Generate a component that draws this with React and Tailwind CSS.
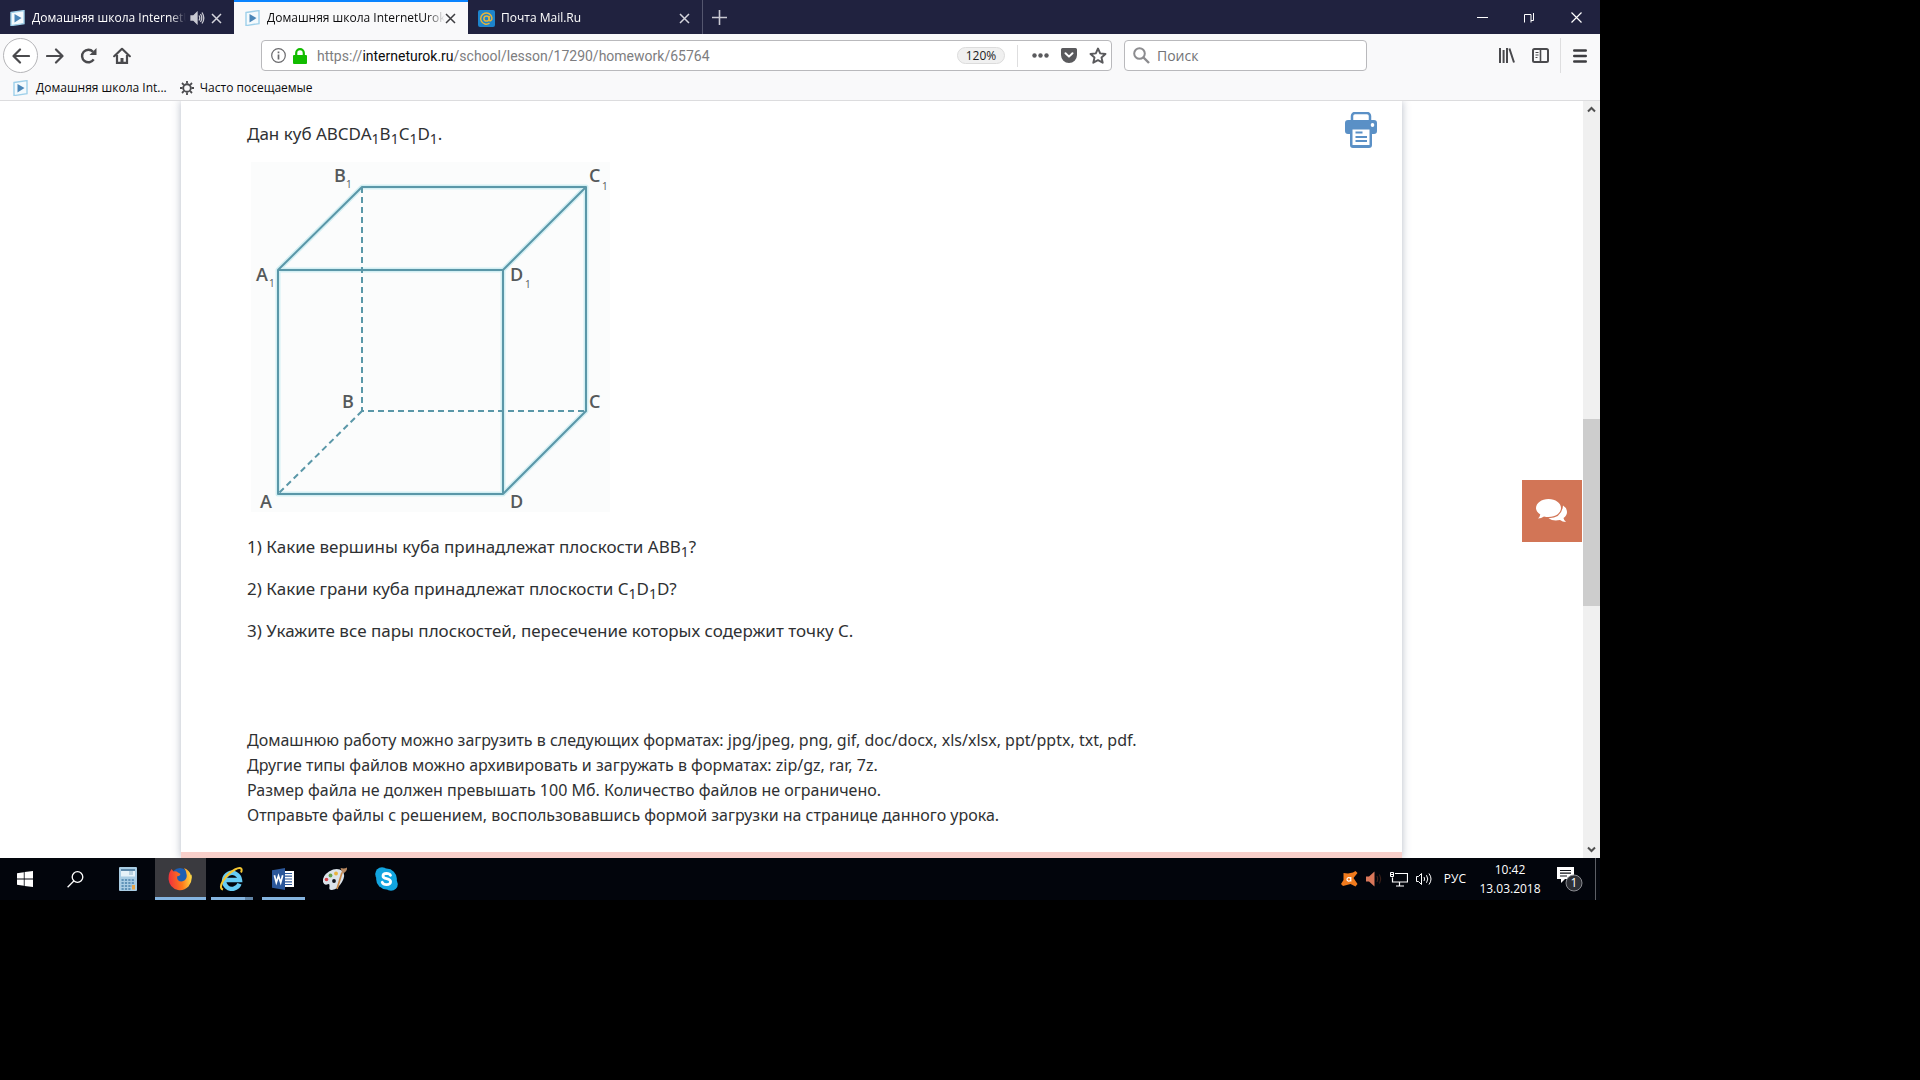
function LessonIcon() {
  return (
    <svg width="16" height="16" viewBox="0 0 16 16" aria-hidden="true" className="shrink-0">
      <path d="M1 2.5 14 .6v13L1 15.6z" fill="#f4fafd" stroke="#9fd0ea" strokeWidth="1.4" />
      <path d="M4.5 4v8.4l7-4.3z" fill="#4a86b8" />
    </svg>
  );
}

function CloseIcon({ color }) {
  return (
    <svg width="11" height="11" viewBox="0 0 11 11" fill="none" stroke={color} strokeWidth="1.5" aria-hidden="true">
      <path d="M1 1l9 9M10 1l-9 9" />
    </svg>
  );
}

function Tab({ title, icon, active, playing }) {
  return (
    <div
      className={
        active
          ? "flex h-[34px] w-[234px] items-center border-t-2 border-[#0a84ff] bg-[#f9f9fa] pr-2 pl-[11px] text-[#0c0c0d]"
          : "flex h-[34px] w-[234px] items-center border-t-2 border-transparent pr-2 pl-[10px] text-white"
      }
    >
      <button type="button" className="flex min-w-0 flex-1 items-center gap-[6px] text-left">
        {icon}
        <span className="min-w-0 flex-1 overflow-hidden whitespace-nowrap [mask-image:linear-gradient(to_right,black_90%,transparent)]">
          {title}
        </span>
      </button>
      {playing && (
        <button type="button" aria-label="Отключить звук вкладки" className="ml-1">
          <svg width="15" height="14" viewBox="0 0 15 14" fill="none" stroke="#c9c9d2" strokeWidth="1.3" aria-hidden="true">
            <path d="M1 5h2.5L7 1.5v11L3.5 9H1z" fill="#c9c9d2" />
            <path d="M9 4.5q1.6 2.5 0 5M10.500 3q2.600 4 0 8M12 1.500q3.600 5.500 0 11" />
          </svg>
        </button>
      )}
      <button type="button" aria-label="Закрыть вкладку" className={playing ? "p-1 pl-[6px]" : "p-1 pl-0"}>
        <CloseIcon color={active ? "#3d3d40" : "#d4d4dc"} />
      </button>
    </div>
  );
}

function TabStrip() {
  return (
    <div className="flex h-[34px] items-center bg-[#20223f] text-xs">
      <Tab title="Домашняя школа InternetUrok" icon={<LessonIcon />} playing />
      <Tab title="Домашняя школа InternetUrok" icon={<LessonIcon />} active />
      <Tab
        title="Почта Mail.Ru"
        icon={
          <svg width="17" height="17" viewBox="0 0 17 17" aria-hidden="true">
            <rect width="17" height="17" rx="2" fill="#1d84cc" />
            <g fill="none" stroke="#e6b53c" strokeWidth="1.500">
              <circle cx="8.500" cy="8.500" r="2.600" />
              <path d="M11.100 6v3.500q.2 1.600 1.500 1.300 1.500-.7 1.300-3A5.600 5.600 0 1 0 11.500 13.200" />
            </g>
          </svg>
        }
      />
      <button type="button" aria-label="Новая вкладка" className="flex h-full items-center border-l border-[#54566e] px-[9px]">
        <svg width="15" height="15" viewBox="0 0 15 15" stroke="#c9c9d2" strokeWidth="1.6" aria-hidden="true">
          <path d="M7.500 0v15M0 7.500h15" />
        </svg>
      </button>
      <div className="ml-auto flex h-full items-center text-white">
        <button type="button" aria-label="Свернуть" className="flex h-full w-[46px] items-center justify-center">
          <svg width="11" height="11" viewBox="0 0 11 11" stroke="#fff" aria-hidden="true">
            <path d="M0 5.500h11" />
          </svg>
        </button>
        <button type="button" aria-label="Восстановить" className="flex h-full w-[48px] items-center justify-center">
          <svg width="11" height="11" viewBox="0 0 11 11" fill="none" stroke="#fff" aria-hidden="true">
            <path d="M.5 10.500V2.500h6.500V10.500M3 .5M9.500 1v7.500H7" />
          </svg>
        </button>
        <button type="button" aria-label="Закрыть" className="flex h-full w-[47px] items-center justify-center">
          <svg width="11" height="11" viewBox="0 0 11 11" stroke="#fff" strokeWidth="1.2" aria-hidden="true">
            <path d="M.5.5l10 10M10.500.5l-10 10" />
          </svg>
        </button>
      </div>
    </div>
  );
}

function NavBar() {
  return (
    <div className="flex h-[43px] items-center pr-[13px] pl-[3px]">
      <button type="button" aria-label="Назад" className="flex size-[35px] items-center justify-center rounded-full border border-[#b5b5b8] bg-white">
        <svg width="18" height="16" viewBox="0 0 18 16" fill="none" stroke="#4a4a4d" strokeWidth="2.200" strokeLinecap="round" strokeLinejoin="round" aria-hidden="true">
          <path d="M17 8H2M8 1.500 1.500 8 8 14.500" />
        </svg>
      </button>
      <button type="button" aria-label="Вперёд" className="ml-[7px] p-px">
        <svg width="18" height="16" viewBox="0 0 18 16" fill="none" stroke="#4a4a4d" strokeWidth="2.200" strokeLinecap="round" strokeLinejoin="round" aria-hidden="true">
          <path d="M1 8h15M10 1.500 16.500 8 10 14.500" />
        </svg>
      </button>
      <button type="button" aria-label="Обновить" className="ml-[14px] p-px">
        <svg width="17" height="16" viewBox="0 0 17 16" fill="none" stroke="#4a4a4d" strokeWidth="2.400" aria-hidden="true">
          <path d="M13.700 11.400A6.300 6.300 0 1 1 13 3.700" />
          <path d="M16.500 0v7h-7z" fill="#4a4a4d" stroke="none" />
        </svg>
      </button>
      <button type="button" aria-label="Домой" className="ml-[14px] p-px">
        <svg width="18" height="17" viewBox="0 0 18 17" fill="none" stroke="#4a4a4d" strokeWidth="2.200" aria-hidden="true">
          <path d="M1.200 9.200 9 1.800l7.800 7.400" strokeLinecap="round" strokeLinejoin="round" />
          <path d="M4 8v7.900h10V8" />
          <path d="M9 16v-5" strokeWidth="3" />
        </svg>
      </button>

      <div className="ml-[129px] flex h-[31px] min-w-0 flex-1 items-center rounded-sm border border-[#b9b9bc] bg-white pr-1 pl-[9px]">
        <button type="button" aria-label="Сведения о сайте" className="flex items-center gap-[7px]">
          <svg width="15" height="15" viewBox="0 0 15 15" fill="none" stroke="#6a6a6d" aria-hidden="true">
            <circle cx="7.500" cy="7.500" r="6.800" strokeWidth="1.200" />
            <path d="M7.500 6.500V11.500M7.500 3.500v1.700" strokeWidth="1.700" />
          </svg>
          <svg width="14" height="16" viewBox="0 0 14 16" aria-hidden="true">
            <rect y="7" width="14" height="9" rx="1" fill="#12bc00" />
            <path d="M3.200 8V5a3.800 3.800 0 0 1 7.600 0v3" fill="none" stroke="#12bc00" strokeWidth="2.200" />
          </svg>
        </button>
        <label className='relative ml-[10px] flex h-full min-w-0 flex-1 items-center overflow-hidden font-["Roboto",sans-serif] text-sm whitespace-nowrap text-[#7d7d80]'>
          <input type="text" aria-label="Адрес" className="absolute inset-0 bg-transparent outline-none" />
          <span>
            https://<span className="text-[#0c0c0d]">interneturok.ru</span>/school/lesson/17290/homework/65764
          </span>
        </label>
        <button type="button" className="flex h-[17px] w-[48px] items-center justify-center rounded-full border border-[#dcdcdc] bg-[#f0f0f0] text-xs text-[#1c1c1e]">
          120%
        </button>
        <span className="ml-3 h-[22px] w-px bg-[#dededf]" />
        <button type="button" aria-label="Действия на странице" className="ml-[14px]">
          <svg width="17" height="5" viewBox="0 0 17 5" fill="#5a5a5d" aria-hidden="true">
            <circle cx="2.500" cy="2.500" r="2.200" />
            <circle cx="8.500" cy="2.500" r="2.200" />
            <circle cx="14.500" cy="2.500" r="2.200" />
          </svg>
        </button>
        <button type="button" aria-label="Сохранить в Pocket" className="ml-3">
          <svg width="16" height="15" viewBox="0 0 16 15" aria-hidden="true">
            <path d="M1.500 0h13A1.500 1.500 0 0 1 16 1.500V7A8 8 0 0 1 0 7V1.500A1.500 1.500 0 0 1 1.500 0z" fill="#5a5a5d" />
            <path d="M4.500 5.200 8 8.600l3.500-3.400" fill="none" stroke="#fff" strokeWidth="2" strokeLinecap="round" strokeLinejoin="round" />
          </svg>
        </button>
        <button type="button" aria-label="Добавить в закладки" className="ml-3">
          <svg width="18" height="17" viewBox="0 0 18 17" fill="none" stroke="#5a5a5d" strokeWidth="1.900" strokeLinejoin="round" aria-hidden="true">
            <path d="M9 1.500l2.200 4.900 5.300.6-4 3.500 1.200 5.200L9 13.100l-4.700 2.600 1.200-5.200-4-3.500 5.300-.6z" />
          </svg>
        </button>
      </div>

      <label className="ml-3 flex h-[31px] w-[243px] items-center gap-[7px] rounded-sm border border-[#b9b9bc] bg-white px-2">
        <svg width="17" height="17" viewBox="0 0 17 17" fill="none" stroke="#8c8c8f" aria-hidden="true">
          <circle cx="6.500" cy="6.500" r="5.300" strokeWidth="2" />
          <path d="M10.500 10.500l5.500 5.500" strokeWidth="2.400" />
        </svg>
        <input type="search" aria-label="Поиск" placeholder="Поиск" className="min-w-0 flex-1 bg-transparent text-sm outline-none placeholder:text-[#737376]" />
      </label>

      <button type="button" aria-label="Библиотека" className="ml-[132px]">
        <svg width="16" height="15" viewBox="0 0 16 15" stroke="#4a4a4d" strokeWidth="2" aria-hidden="true">
          <path d="M1 0v15M4.600 2v13M8 0v15M10.400 .5l4.600 14" />
        </svg>
      </button>
      <button type="button" aria-label="Боковая панель" className="ml-[17px]">
        <svg width="17" height="15" viewBox="0 0 17 15" fill="none" stroke="#4a4a4d" aria-hidden="true">
          <rect x="1" y="1" width="15" height="13" rx="1.500" strokeWidth="2" />
          <path d="M8.500 1v13" strokeWidth="1.600" />
          <path d="M3.500 4.500h3M3.500 7h3M3.500 9.500h2" />
        </svg>
      </button>
      <span className="ml-[11px] h-[35px] w-px bg-[#dededf]" />
      <button type="button" aria-label="Меню" className="ml-3">
        <svg width="14" height="14" viewBox="0 0 14 14" stroke="#3d3d40" strokeWidth="2.400" strokeLinecap="round" aria-hidden="true">
          <path d="M1.200 1.500h11.600M1.200 7h11.600M1.200 12.500h11.600" />
        </svg>
      </button>
    </div>
  );
}

function BookmarksBar() {
  return (
    <div className="flex h-6 items-center gap-[13px] border-b border-[#dcdcde] pb-[2px] pl-[13px] text-xs text-[#0c0c0d]">
      <a href="#lesson" className="flex items-center gap-[7px]">
        <LessonIcon />
        Домашняя школа Int...
      </a>
      <button type="button" className="flex items-center gap-[6px]">
        <svg width="14" height="14" viewBox="0 0 14 14" fill="none" stroke="#4a4a4d" aria-hidden="true">
          <circle cx="7" cy="7" r="3.800" strokeWidth="1.900" />
          <path d="M7 0v2.500M7 11.500V14M0 7h2.500M11.500 7H14M2 2l1.800 1.800M10.200 10.200 12 12M12 2l-1.800 1.800M3.800 10.200 2 12" strokeWidth="1.800" />
        </svg>
        Часто посещаемые
      </button>
    </div>
  );
}

function CubeDrawing() {
  return (
    <svg width="359" height="350" viewBox="251 162 359 350" role="img" aria-label="Куб" className="ml-1 block">
      <rect x="251" y="162" width="359" height="350" fill="#fbfcfc" />
      <g fill="none" strokeLinejoin="round">
        <g stroke="#d3eff3" strokeWidth="5">
          <path d="M278 270H503V494H278zM278 270 362 187H586L503 270M586 187V411L503 494" />
        </g>
        <g stroke="#5a97a8" strokeWidth="2">
          <path d="M278 270H503V494H278zM278 270 362 187H586L503 270M586 187V411L503 494" />
          <path d="M362 187V411H586M362 411 278 494" strokeDasharray="6 4" />
        </g>
      </g>
      <g fontSize="18" fontWeight="600" fill="#55595b" fontFamily="'Open Sans', sans-serif">
        <text x="334" y="182">B</text>
        <text x="589" y="182">C</text>
        <text x="256" y="281">A</text>
        <text x="510" y="281">D</text>
        <text x="342" y="408">B</text>
        <text x="589" y="408">C</text>
        <text x="260" y="508">A</text>
        <text x="510" y="508">D</text>
      </g>
      <g fontSize="10" fill="#55595b" fontFamily="'Open Sans', sans-serif">
        <text x="346" y="188">1</text>
        <text x="602" y="190">1</text>
        <text x="269" y="287">1</text>
        <text x="525" y="288">1</text>
      </g>
    </svg>
  );
}

function One() {
  return <sub className="bottom-[-4px] text-sm leading-none">1</sub>;
}

function LessonPage() {
  return (
    <div className="relative flex overflow-hidden bg-white">
      <div className="flex min-w-0 flex-1 pr-[181px] pl-[181px]">
        <main className='min-w-0 flex-1 bg-white pt-[11px] font-["Noto_Sans",sans-serif] text-[#2f3133] shadow-[0_0_8px_rgba(90,105,130,0.45)]'>
          <div className="pr-[25px] pl-[66px]">
            <div className="flex items-start justify-between">
              <p className="pt-2 text-[17px] leading-7">
                Дан куб ABCDA<One />B<One />C<One />D<One />.
              </p>
              <button type="button" aria-label="Распечатать">
                <svg width="32" height="36" viewBox="0 0 32 36" aria-hidden="true">
                  <path d="M7 8V4a3 3 0 0 1 3-3h12a3 3 0 0 1 3 3v4" fill="none" stroke="#5a90c6" strokeWidth="2.500" />
                  <path d="M3 8h26a3 3 0 0 1 3 3v8a3 3 0 0 1-3 3h-2v11a3 3 0 0 1-3 3H8a3 3 0 0 1-3-3V22H3a3 3 0 0 1-3-3v-8a3 3 0 0 1 3-3z" fill="#5a90c6" />
                  <path d="M7.500 17.500h17V33h-17z" fill="#fff" />
                  <path d="M10.500 20.500h7M10.500 25h11.500M10.500 29h11.500" stroke="#5a90c6" strokeWidth="2.200" />
                  <ellipse cx="27.500" cy="13" rx="1.800" ry="2" fill="#fff" />
                </svg>
              </button>
            </div>
            <div className="mt-[14px]">
              <CubeDrawing />
            </div>
            <div className="mt-[21px] flex flex-col gap-[14px] text-[17px] leading-7">
              <p>1) Какие вершины куба принадлежат плоскости ABB<One />?</p>
              <p>2) Какие грани куба принадлежат плоскости C<One />D<One />D?</p>
              <p>3) Укажите все пары плоскостей, пересечение которых содержит точку C.</p>
            </div>
            <div className="mt-[83px] text-base leading-[25px]">
              <p>Домашнюю работу можно загрузить в следующих форматах: jpg/jpeg, png, gif, doc/docx, xls/xlsx, ppt/pptx, txt, pdf.</p>
              <p>Другие типы файлов можно архивировать и загружать в форматах: zip/gz, rar, 7z.</p>
              <p>Размер файла не должен превышать 100 Мб. Количество файлов не ограничено.</p>
              <p>Отправьте файлы с решением, воспользовавшись формой загрузки на странице данного урока.</p>
            </div>
          </div>
          <div className="mt-[24px] h-[6px] bg-[#f8cfca]" />
        </main>
      </div>

      <button type="button" aria-label="Открыть чат" className="absolute top-1/2 right-[18px] flex h-[62px] w-[60px] items-center justify-center bg-[#d27556]">
        <svg width="32" height="24" viewBox="0 0 32 24" fill="#fff" aria-hidden="true">
          <path d="M12.500 0C19.500 0 25 4 25 9s-5.500 9-12.500 9q-2.300 0-4.500-.6-2.800 1.900-6 2 2-1.700 2.300-3.900Q0 12.800 0 9c0-5 5.500-9 12.500-9z" />
          <path d="M27 6.500q4 2.600 4 6.500 0 3.500-3.500 6 .3 2.200 2.500 4-3.500 0-6-2-7 1.500-11.500-1.700Q26 19 27 6.500z" />
        </svg>
      </button>

      <div className="flex w-[17px] flex-col bg-[#f0f0f0]">
        <button type="button" aria-label="Прокрутить вверх" className="flex h-[17px] items-center justify-center">
          <svg width="9" height="7" viewBox="0 0 9 7" fill="none" stroke="#505050" strokeWidth="2" aria-hidden="true">
            <path d="M1 5.500 4.500 2 8 5.500" />
          </svg>
        </button>
        <div className="grow-[301]" />
        <div className="grow-[187] bg-[#cdcdcd]" />
        <div className="grow-[235]" />
        <button type="button" aria-label="Прокрутить вниз" className="flex h-[17px] items-center justify-center">
          <svg width="9" height="7" viewBox="0 0 9 7" fill="none" stroke="#505050" strokeWidth="2" aria-hidden="true">
            <path d="M1 1.500 4.500 5 8 1.500" />
          </svg>
        </button>
      </div>
    </div>
  );
}

function Taskbar() {
  return (
    <footer className="flex h-[42px] items-stretch bg-[#02050c] text-xs text-white">
      <button type="button" aria-label="Пуск" className="flex w-[50px] items-center justify-center">
        <svg width="16" height="16" viewBox="0 0 16 16" fill="#fff" aria-hidden="true">
          <path d="M0 2.200 6.800 1.200v6.300H0zM7.600 1.100 16 0v7.500H7.600zM0 8.400h6.800v6.400L0 13.800zM7.600 8.400H16V16l-8.400-1.100z" />
        </svg>
      </button>
      <button type="button" aria-label="Поиск в Windows" className="flex w-[50px] items-center justify-center">
        <svg width="17" height="17" viewBox="0 0 17 17" fill="none" stroke="#fff" strokeWidth="1.300" aria-hidden="true">
          <circle cx="10.500" cy="6" r="5.300" />
          <path d="M6.800 10 .6 16.200" />
        </svg>
      </button>
      <button type="button" aria-label="Калькулятор" className="ml-[3px] flex w-[50px] items-center justify-center">
        <svg width="18" height="24" viewBox="0 0 18 24" aria-hidden="true">
          <rect width="18" height="24" rx="1" fill="#a9cde4" />
          <rect x="2" y="2" width="14" height="7.500" fill="#e6f2f8" />
          <path d="M2 2h14v2H2z" fill="#5b87a8" />
          <path d="M10 4h4v4h-4z" fill="#b9d2e0" />
          <path d="M2.500 13h13M2.500 16h13M2.500 19h13M2.500 22h9" stroke="#5f93b8" strokeWidth="1.800" strokeDasharray="2.200 1.200" />
          <rect x="13" y="18" width="3" height="4.500" fill="#e8a64a" />
        </svg>
      </button>
      <button type="button" aria-label="Firefox" className="ml-[2px] flex w-[51px] items-center justify-center border-b-[3px] border-[#84b4e0] bg-[#3a3a3f] pt-[3px] pr-[2px]">
        <svg width="24" height="24" viewBox="0 0 24 24" aria-hidden="true">
          <defs>
            <linearGradient id="fox" x1="0" y1=".4" x2="1" y2=".3">
              <stop offset="0" stopColor="#f0323c" />
              <stop offset=".55" stopColor="#ff7a1a" />
              <stop offset="1" stopColor="#ffe14a" />
            </linearGradient>
          </defs>
          <circle cx="12" cy="10" r="9" fill="#1d5fb4" />
          <path d="M1.500 5.500 3.500 2l2 2.500Q8 3.500 10 5.500l2.500 1.500q-.5 2-3.500 2.500 0 5 4.500 5 4-.5 5-4Q19.500 5 16 1q5.500 2 7 7.500.500-1 .4-1.500Q25 14 20.500 19.500 16 24 10 23 1.500 21 .6 12.500 .4 8 1.500 5.500z" fill="url(#fox)" />
        </svg>
      </button>
      <button type="button" aria-label="Internet Explorer" className="ml-[5px] flex w-[42px] flex-col items-center">
        <span className="flex flex-1 items-center pt-[3px] pr-[2px]">
          <svg width="24" height="24" viewBox="0 0 24 24" fill="none" aria-hidden="true">
            <path d="M20.500 16.800A8 8 0 1 1 21 13H7" stroke="#66ccf5" strokeWidth="4.400" />
            <path d="M4 22.500C-2 21 6 8 16 2.500q5-2.600 6.500-.5.500 1.500-.5 3.500" stroke="#f4c632" strokeWidth="2" />
          </svg>
        </span>
        <span className="flex h-[3px] w-full bg-[#84b4e0]">
          <span className="ml-auto w-2 bg-[#6185a8]" />
        </span>
      </button>
      <button type="button" aria-label="Word" className="ml-[9px] flex w-[43px] items-center justify-center border-b-[3px] border-[#84b4e0] pt-[3px] pr-[2px]">
        <svg width="22" height="22" viewBox="0 0 22 22" aria-hidden="true">
          <path d="M12 3h10v16H12z" fill="#fff" />
          <path d="M13 5.500h7M13 8.200h7M13 11h7M13 13.800h7M13 16.500h7" stroke="#2b579a" strokeWidth="1.200" />
          <path d="M0 2.200 13 0v22L0 19.800z" fill="#2b579a" />
          <path d="M2.400 7.200 4.300 14.500 6.500 8 8.700 14.500l2-7.300" fill="none" stroke="#fff" strokeWidth="1.700" />
        </svg>
      </button>
      <button type="button" aria-label="Paint" className="ml-[5px] flex w-[50px] items-center justify-center">
        <svg width="26" height="24" viewBox="0 0 26 24" aria-hidden="true">
          <path d="M1 15Q0 9 7 4.500 15 0 20.500 4q3.500 4-.5 11-4 7-10 8-3.500.2-2.500-3.500Q8 16 5 17.500q-3 .8-4-2.500z" fill="#dbe3ea" />
          <circle cx="4.500" cy="12.500" r="1.800" fill="#d8434a" />
          <circle cx="8.500" cy="8.500" r="1.900" fill="#66a04b" />
          <circle cx="14" cy="6.500" r="1.900" fill="#e8b33c" />
          <circle cx="12" cy="14" r="1.900" fill="#10131a" />
          <path d="M20 5.500 15 22" stroke="#c98a4a" strokeWidth="1.700" />
          <path d="M18.500 1q4 1 6.500-.5.500 4-4.500 6z" fill="#b98a62" />
        </svg>
      </button>
      <button type="button" aria-label="Skype" className="ml-[1px] flex w-[50px] items-center justify-center">
        <svg width="23" height="24" viewBox="0 0 23 24" aria-hidden="true">
          <circle cx="7" cy="7" r="6.800" fill="#12a5e0" />
          <circle cx="16" cy="17" r="6.800" fill="#12a5e0" />
          <circle cx="11.500" cy="12" r="10.400" fill="#12a5e0" />
          <path d="M15.500 8.300Q14.500 6.300 11.500 6.300 8 6.400 8 9q0 1.900 3.600 2.600 4 .8 4 3.200-.1 2.800-4 2.900-3.400 0-4.400-2.400" fill="none" stroke="#fff" strokeWidth="2.800" strokeLinecap="round" />
        </svg>
      </button>

      <div className="ml-auto flex items-center">
        <button type="button" aria-label="Avast">
          <svg width="17" height="16" viewBox="0 0 17 16" aria-hidden="true">
            <path d="M2.500 2 7 2.500 12 1.500 14.500 0 16.500 2 12.500 7 16.500 13l-2 2.500-5-2.500L2 15 0 13l2.500-4z" fill="#f07a1c" />
            <path d="M9.800 6v4.500M9.600 8.200a1.800 1.800 0 1 0-.2 1" fill="none" stroke="#fff" strokeWidth="1.200" />
          </svg>
        </button>
        <button type="button" aria-label="Звуковая карта" className="ml-2">
          <svg width="16" height="16" viewBox="0 0 16 16" fill="none" aria-hidden="true">
            <path d="M0 5.500h3L8.500.5v15L3 10.500H0z" fill="#d9775a" />
            <path d="M11 5q1.500 3 0 6M13.500 3.500q2.500 4.500 0 9" stroke="#43231a" />
          </svg>
        </button>
        <button type="button" aria-label="Сеть" className="ml-2">
          <svg width="18" height="15" viewBox="0 0 18 15" fill="none" stroke="#fff" aria-hidden="true">
            <path d="M5 1.500h12.500v8.500H2.500V5.500M9.500 10v4M6 14h8" strokeWidth="1.200" />
            <path d="M.5.5h3v4h-3zM1 2.500h3" />
          </svg>
        </button>
        <button type="button" aria-label="Громкость" className="ml-2">
          <svg width="18" height="14" viewBox="0 0 18 14" fill="none" stroke="#fff" aria-hidden="true">
            <path d="M.5 4.500h2L5.500 1.500v11L2.500 9.500h-2zM8 5q1.200 2 0 4M10.500 3.200q2.500 3.800 0 7.600M13 1.500q4 5.500 0 11" />
          </svg>
        </button>
        <button type="button" className="ml-[10px]">РУС</button>
        <button type="button" className="ml-[13px] w-[62px] text-center leading-[19px]">
          <time className="block">10:42</time>
          <time className="block">13.03.2018</time>
        </button>
        <button type="button" aria-label="Уведомления" className="ml-[16px]">
          <svg width="26" height="26" viewBox="0 0 26 26" aria-hidden="true">
            <path d="M0 1h17v12H8l-4 4v-4H0z" fill="#fff" />
            <path d="M3 4.500h11M3 7.200h11M3 10h7" stroke="#10131a" strokeWidth="1.200" />
            <circle cx="17" cy="17" r="8" fill="#2e3036" stroke="#8a8c92" />
            <text x="17" y="21" fontSize="12" fill="#fff" textAnchor="middle" fontFamily="'Open Sans', sans-serif">1</text>
          </svg>
        </button>
        <button type="button" aria-label="Показать рабочий стол" className="ml-3 h-[42px] w-[5px] border-l border-[#5c5f66]" />
      </div>
    </footer>
  );
}

export default function App() {
  return (
    <div className="min-h-screen bg-black">
      <div className='w-5/6 font-["Open_Sans","Noto_Sans",sans-serif]'>
        <header className="bg-[#f9f9fa]">
          <TabStrip />
          <NavBar />
          <BookmarksBar />
        </header>
        <LessonPage />
        <Taskbar />
      </div>
    </div>
  );
}
